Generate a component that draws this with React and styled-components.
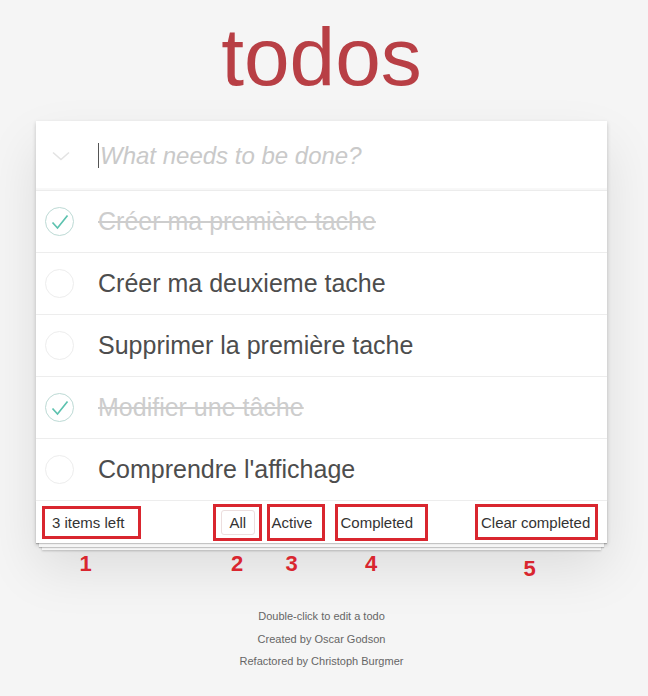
import React from "react";
import styled, { createGlobalStyle } from "styled-components";

const Global = createGlobalStyle`
  html, body { margin: 0; padding: 0; background: #f5f5f5; }
  body { font-family: "Liberation Sans", Arial, sans-serif; color: #4d4d4d; }
`;

const Page = styled.div`
  width: 643px;
  padding-top: 16px;
  display: flex;
  flex-direction: column;
  align-items: center;
`;

const Title = styled.h1`
  margin: 0 0 23px;
  font-size: 82px;
  line-height: 82px;
  font-weight: 400;
  color: #b83f45;
  text-align: center;
`;

const Card = styled.section`
  width: 571px;
  background: #fff;
  box-shadow: 0 2px 4px rgba(0, 0, 0, 0.2), 0 25px 50px rgba(0, 0, 0, 0.1);
  position: relative;
  isolation: isolate;
`;

const Header = styled.div`
  height: 69px;
  display: flex;
  align-items: center;
  border-bottom: 1px solid #ececec;
  box-shadow: inset 0 -2px 1px rgba(0, 0, 0, 0.03);
`;

const Toggle = styled.div`
  width: 50px;
  display: flex;
  justify-content: center;
`;

const Input = styled.div`
  display: flex;
  align-items: center;
  margin-left: 12px;
  font-size: 24px;
  font-style: italic;
  color: #c9c9c9;
`;

const Caret = styled.span`
  width: 1px;
  height: 25px;
  background: #555;
  margin-right: 1px;
`;

const List = styled.ul`
  list-style: none;
  margin: 0;
  padding: 0;
`;

const Row = styled.li`
  height: 61px;
  border-bottom: 1px solid #ededed;
  display: flex;
  align-items: center;
`;

const Check = styled.span`
  width: 29px;
  height: 29px;
  margin-left: 9px;
  border-radius: 50%;
  border: 1px solid ${(p) => (p.$done ? "#bddad5" : "#ededed")};
  display: flex;
  align-items: center;
  justify-content: center;
  box-sizing: border-box;
`;

const Label = styled.span`
  margin-left: 24px;
  font-size: 25px;
  color: ${(p) => (p.$done ? "#cdcdcd" : "#4d4d4d")};
  text-decoration: ${(p) => (p.$done ? "line-through" : "none")};
`;

const Footer = styled.footer`
  height: 42px;
  padding: 0 9px 0 6px;
  display: grid;
  grid-template-columns: 1fr auto 1fr;
  align-items: center;
  font-size: 15px;
  color: #333;
  position: relative;
  &::before {
    content: "";
    position: absolute;
    left: 0;
    right: 0;
    bottom: 0;
    height: 42px;
    z-index: -1;
    box-shadow: 0 1px 1px rgba(0, 0, 0, 0.2), 0 7px 0 -3px #f6f6f6,
      0 8px 1px -3px rgba(0, 0, 0, 0.2), 0 13px 0 -6px #f6f6f6,
      0 14px 2px -6px rgba(0, 0, 0, 0.2);
  }
`;

const Filters = styled.div`
  display: flex;
  align-items: center;
`;

const Mark = styled.div`
  position: relative;
  box-sizing: border-box;
  width: ${(p) => p.$w}px;
  height: ${(p) => p.$h || 36}px;
  margin-left: ${(p) => p.$ml || 0}px;
  padding-left: ${(p) => p.$pl}px;
  border: 3px solid #d9262f;
  display: flex;
  align-items: center;
  justify-self: ${(p) => p.$js || "auto"};
  white-space: nowrap;
`;

const Num = styled.span`
  position: absolute;
  top: calc(100% + ${(p) => p.$dy}px);
  left: calc(50% + ${(p) => p.$dx}px);
  transform: translateX(-50%);
  font-size: 22px;
  font-weight: 700;
  color: #d9262f;
  line-height: 22px;
`;

const Selected = styled.span`
  border: 1px solid #ecdede;
  border-radius: 3px;
  padding: 3px 8px;
  line-height: 17px;
`;

const Info = styled.footer`
  margin-top: 67px;
  display: flex;
  flex-direction: column;
  align-items: center;
  gap: 10px;
  font-size: 11px;
  line-height: 12.5px;
  color: #666;
`;

const ChevronIcon = () => (
  <svg width="18" height="10" viewBox="0 0 18 10">
    <polyline points="1,1.5 9,8.5 17,1.5" fill="none" stroke="#e3e3e3" strokeWidth="1.6" />
  </svg>
);

const CheckIcon = () => (
  <svg width="18" height="16" viewBox="0 0 18 16">
    <polyline points="1.5,8.5 6.5,14 16.5,1.5" fill="none" stroke="#5dc2af" strokeWidth="1.7" />
  </svg>
);

const todos = [
  { text: "Créer ma première tache", done: true },
  { text: "Créer ma deuxieme tache", done: false },
  { text: "Supprimer la première tache", done: false },
  { text: "Modifier une tâche", done: true },
  { text: "Comprendre l'affichage", done: false },
];

export default function App() {
  return (
    <>
      <Global />
      <Page>
        <Title>todos</Title>
        <Card>
          <Header>
            <Toggle>
              <ChevronIcon />
            </Toggle>
            <Input>
              <Caret />
              What needs to be done?
            </Input>
          </Header>
          <List>
            {todos.map((t) => (
              <Row key={t.text}>
                <Check $done={t.done}>{t.done && <CheckIcon />}</Check>
                <Label $done={t.done}>{t.text}</Label>
              </Row>
            ))}
          </List>
          <Footer>
            <Mark $w={99} $h={33} $pl={7} $js="start">
              3 items left
              <Num $dx={-6} $dy={17}>1</Num>
            </Mark>
            <Filters>
              <Mark $w={49} $h={37} $pl={5}>
                <Selected>All</Selected>
                <Num $dx={0} $dy={15}>2</Num>
              </Mark>
              <Mark $w={58} $h={37} $pl={2} $ml={5}>
                Active
                <Num $dx={-4} $dy={15}>3</Num>
              </Mark>
              <Mark $w={93} $h={37} $pl={3} $ml={10}>
                Completed
                <Num $dx={-10} $dy={15}>4</Num>
              </Mark>
            </Filters>
            <Mark $w={123} $h={36} $pl={3} $js="end">
              Clear completed
              <Num $dx={-7} $dy={21}>5</Num>
            </Mark>
          </Footer>
        </Card>
        <Info>
          <span>Double-click to edit a todo</span>
          <span>Created by Oscar Godson</span>
          <span>Refactored by Christoph Burgmer</span>
        </Info>
      </Page>
    </>
  );
}
